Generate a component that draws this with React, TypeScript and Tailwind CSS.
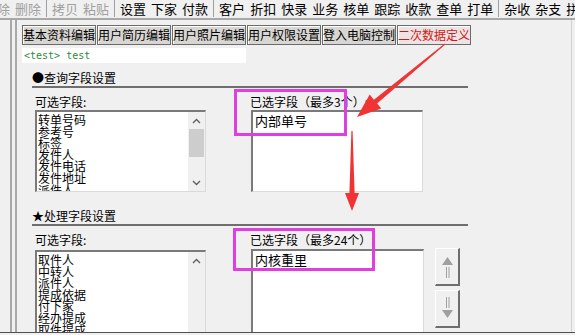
import React from "react";

type TB = { t: string; g?: boolean } | "|";

const toolbar: TB[] = [
  { t: "除", g: true },
  { t: "删除", g: true },
  "|",
  { t: "拷贝", g: true },
  { t: "粘贴", g: true },
  "|",
  { t: "设置" },
  { t: "下家" },
  { t: "付款" },
  "|",
  { t: "客户" },
  { t: "折扣" },
  { t: "快录" },
  { t: "业务" },
  { t: "核单" },
  { t: "跟踪" },
  { t: "收款" },
  { t: "查单" },
  { t: "打单" },
  "|",
  { t: "杂收" },
  { t: "杂支" },
  { t: "拼单" },
];

const tabs = ["基本资料编辑", "用户简历编辑", "用户照片编辑", "用户权限设置", "登入电脑控制", "二次数据定义"];

function Chevron({ up }: { up: boolean }) {
  return (
    <svg width="9" height="6" viewBox="0 0 9 6">
      <polyline
        points={up ? "1,5 4.5,1.5 8,5" : "1,1 4.5,4.5 8,1"}
        fill="none"
        stroke="#606060"
        strokeWidth="1.4"
      />
    </svg>
  );
}

function ListBox({
  items,
  scroll,
  thumb,
  width,
  height,
}: {
  items: string[];
  scroll?: boolean;
  thumb?: boolean;
  width: string;
  height: string;
}) {
  return (
    <div
      className={`${width} ${height} bg-white flex border-t-2 border-l-2 border-t-[#7a7a7a] border-l-[#7a7a7a] border-r border-b border-r-[#dadada] border-b-[#dadada] overflow-hidden`}
    >
      <div className="flex-1 pl-[1px] pt-[2px] text-[12px] leading-[11.6px] text-black overflow-hidden">
        {items.map((it, i) => (
          <div key={i} className="h-[11.6px] whitespace-nowrap">
            {it}
          </div>
        ))}
      </div>
      {scroll && (
        <div className="w-[17px] flex flex-col bg-[#f0f0f0]">
          <div className="h-[17px] flex items-center justify-center">
            <Chevron up />
          </div>
          {thumb && <div className="h-[28px] mx-[1px] bg-[#cdcdcd]" />}
          <div className="flex-1" />
          {thumb && (
            <div className="h-[17px] flex items-center justify-center">
              <Chevron up={false} />
            </div>
          )}
        </div>
      )}
    </div>
  );
}

function SelBox({ item, width, height }: { item: string; width: string; height: string }) {
  return (
    <div
      className={`${width} ${height} bg-white border-t-2 border-l-2 border-t-[#7a7a7a] border-l-[#7a7a7a] border-r border-b border-r-[#dadada] border-b-[#dadada] pl-[2px] pt-[2px] text-[13px] leading-[14px] text-black`}
    >
      {item}
    </div>
  );
}

function MoveBtn({ up }: { up: boolean }) {
  return (
    <div className="w-[25px] h-[38px] bg-[#f0f0f0] border-t border-l border-t-white border-l-white border-r-2 border-b-2 border-r-[#6e6e6e] border-b-[#6e6e6e]">
      <svg width="23" height="36" viewBox="0 0 23 36">
        {up ? (
          <g fill="#a0a0a0">
            <polygon points="6,16 11.5,8 17,16" />
            <rect x="10" y="18" width="1" height="11" />
            <rect x="12.5" y="18" width="1" height="11" />
          </g>
        ) : (
          <g fill="#a0a0a0">
            <rect x="10" y="6" width="1" height="11" />
            <rect x="12.5" y="6" width="1" height="11" />
            <polygon points="6,19 11.5,27 17,19" />
          </g>
        )}
      </svg>
    </div>
  );
}

export default function App() {
  return (
    <div className="relative w-[575px] h-[335px] overflow-hidden bg-[#f0f0f0] font-['Noto_Sans_CJK_SC','Microsoft_YaHei',sans-serif] text-black">
      {/* toolbar */}
      <div className="h-[20px] flex items-start gap-[5px] border-b-2 border-[#a8a8a8] whitespace-nowrap overflow-hidden text-[13px] leading-[16px]">
        {toolbar.map((it, i) =>
          it === "|" ? (
            <div key={i} className="w-px h-[17px] bg-[#a0a0a0] shrink-0" />
          ) : (
            <div
              key={i}
              className={`shrink-0 pt-[1px] ${i === 0 ? "ml-[-3px]" : ""} ${it.g ? "text-[#a0a0a0]" : "text-black"}`}
            >
              {it.t}
            </div>
          )
        )}
      </div>

      {/* main */}
      <div className="h-[313px] flex border-b border-[#505050]">
        <div className="w-[10px] shrink-0" />
        <div className="w-[5px] shrink-0 border-l-2 border-[#a8a8a8]" />
        <div className="w-[557px] shrink-0 border-l-2 border-[#a8a8a8] border-r border-r-[#d0d0d0] pl-[5px] pt-[5px] flex flex-col overflow-hidden">
          {/* tabs */}
          <div className="flex gap-[1px] h-[20px]">
            {tabs.map((t, i) => {
              const sel = i === tabs.length - 1;
              return (
                <div
                  key={t}
                  className={`w-[74px] h-[20px] flex items-center justify-center text-[12px] leading-[14px] border border-[#6b6b6b] shadow-[inset_1px_1px_0_#ffffff] ${
                    sel ? "bg-[#ece4e4] text-[#d01818]" : "bg-[#d8d6d2] text-black"
                  }`}
                >
                  {t}
                </div>
              );
            })}
          </div>

          {/* input */}
          <div className="mt-[3px] h-[15px] w-[224px] bg-white pl-[2px] text-[10px] leading-[15px] font-['DejaVu_Sans_Mono',monospace] text-[#2f8a3a] whitespace-pre">
            {"<test> test"}
          </div>

          {/* section 1 */}
          <div className="pl-[10px]">
            <div className="mt-[7px] h-[16px] text-[12px] leading-[16px]">●查询字段设置</div>
            <div className="h-[2px] w-[436px] bg-[#6e6e6e]" />
            <div className="flex">
              <div className="pl-[3px] flex flex-col">
                <div className="mt-[6px] h-[16px] text-[12px] leading-[16px]">可选字段:</div>
                <ListBox
                  width="w-[171px]"
                  height="h-[82px]"
                  scroll
                  thumb
                  items={["转单号码", "参考号", "标签", "发件人", "发件电话", "发件地址", "派件人"]}
                />
              </div>
              <div className="ml-[44px] flex flex-col">
                <div className="mt-[6px] h-[16px] text-[12px] leading-[16px] whitespace-nowrap">已选字段（最多3个）:</div>
                <div className="pl-[1px]">
                  <SelBox item="内部单号" width="w-[172px]" height="h-[82px]" />
                </div>
              </div>
            </div>

            {/* section 2 */}
            <div className="mt-[16px] h-[16px] text-[12px] leading-[16px]">★处理字段设置</div>
            <div className="h-[2px] w-[436px] bg-[#6e6e6e]" />
            <div className="flex">
              <div className="pl-[3px] flex flex-col">
                <div className="mt-[6px] h-[16px] text-[12px] leading-[16px]">可选字段:</div>
                <div className="mt-[2px]">
                  <ListBox
                    width="w-[171px]"
                    height="h-[90px]"
                    scroll
                    items={["取件人", "中转人", "派件人", "提成依据", "付下家", "经办提成", "取件提成", "派件提成"]}
                  />
                </div>
              </div>
              <div className="ml-[44px] flex flex-col">
                <div className="mt-[6px] h-[16px] text-[12px] leading-[16px] whitespace-nowrap">已选字段（最多24个）:</div>
                <div className="mt-[1px] pl-[1px] flex">
                  <SelBox item="内核重里" width="w-[173px]" height="h-[90px]" />
                  <div className="ml-[11px] flex flex-col gap-[4px] -mt-[1px]">
                    <MoveBtn up />
                    <MoveBtn up={false} />
                  </div>
                </div>
              </div>
            </div>
          </div>
        </div>
      </div>

      {/* annotations */}
      <svg className="absolute left-0 top-0 pointer-events-none" width="575" height="335" viewBox="0 0 575 335">
        <rect x="235.5" y="90.5" width="110" height="44" fill="none" stroke="#e03ee0" strokeWidth="3" />
        <rect x="234.5" y="229.5" width="139" height="40" fill="none" stroke="#e03ee0" strokeWidth="3" />
        <polygon
          fill="#f03434"
          points="445.3,44.4 377.1,103.5 381.3,108.6 357,117 369.7,94.6 373.9,99.7 444.7,43.6"
        />
        <polygon
          fill="#f03434"
          points="352.6,131 354.6,193 359,193 352,211 345,193 349.4,193 351.4,131"
        />
      </svg>
    </div>
  );
}
